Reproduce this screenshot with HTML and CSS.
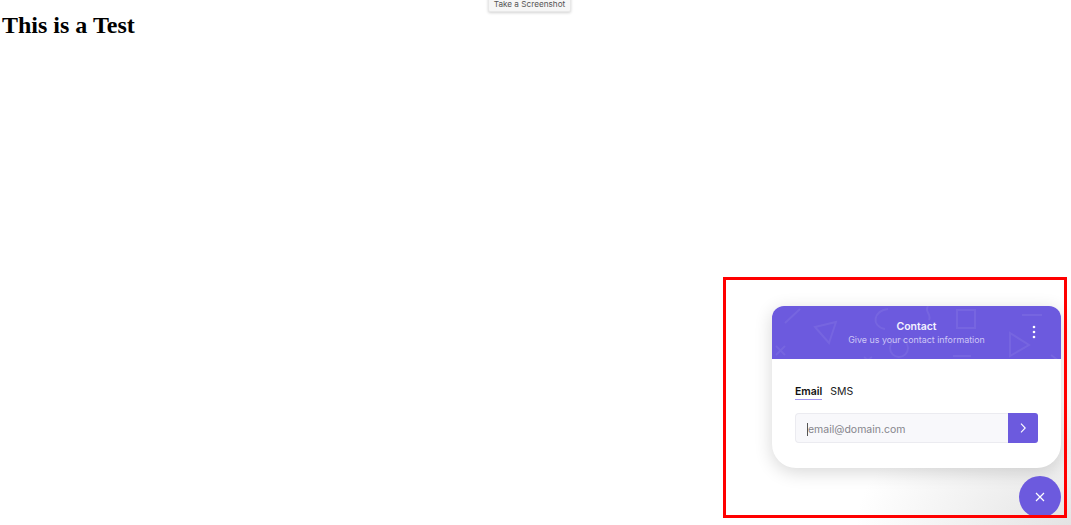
FILE: index.html
```html
<!DOCTYPE html>
<html lang="en">
<head>
    <meta charset="UTF-8">
    <meta name="viewport" content="width=device-width, initial-scale=1.0">
    <title>This is a Test</title>
    <link rel="stylesheet" href="styles.css">
</head>
<body>
    <button type="button" class="shot-btn">Take a Screenshot</button>
    <h1 class="title">This is a Test</h1>

    <div class="corner-glow"></div>

    <div class="widget">
        <div class="card">
            <div class="card-head">
                <svg class="head-shapes" width="289" height="53" viewBox="0 0 289 53" fill="none">
                    <path d="M13 17 L28 3"/>
                    <path d="M43 21 L64 16 L57 37 Z"/>
                    <path d="M4 40 L13 49 M13 40 L4 49"/>
                    <path d="M116 3 C102 4 98 20 113 23"/>
                    <path d="M156 0 C152 6 160 8 157 14"/>
                    <rect x="185" y="4" width="18" height="18"/>
                    <circle cx="127" cy="42" r="9"/>
                    <path d="M181 50 H199"/>
                    <path d="M250 9 H270"/>
                    <path d="M238 27 L238 50 L257 39 Z"/>
                    <path d="M92 51 L100 57 M100 51 L92 57"/>
                    <path d="M279 49 L287 55"/>
                </svg>
                <div class="head-title">Contact</div>
                <div class="head-sub">Give us your contact information</div>
                <svg class="head-menu" width="4" height="14" viewBox="0 0 4 14" fill="#fff">
                    <circle cx="2" cy="2" r="1.3"/>
                    <circle cx="2" cy="7" r="1.3"/>
                    <circle cx="2" cy="12" r="1.3"/>
                </svg>
            </div>
            <div class="card-body">
                <div class="tabs">
                    <span class="tab tab-active">Email</span>
                    <span class="tab">SMS</span>
                </div>
                <div class="email-row">
                    <div class="email-input"><span class="caret"></span><span>email@domain.com</span></div>
                    <div class="email-send">
                        <svg width="8" height="12" viewBox="0 0 8 12" fill="none" stroke="#fff" stroke-width="1.1">
                            <path d="M2 1.7 L6.2 6 L2 10.3"/>
                        </svg>
                    </div>
                </div>
            </div>
        </div>
        <div class="fab">
            <svg width="12" height="12" viewBox="0 0 12 12" fill="none" stroke="#fff" stroke-width="1.2">
                <path d="M2 2 L10 10 M10 2 L2 10"/>
            </svg>
        </div>
    </div>

    <!-- red box drawn over the widget -->
    <div class="red-frame"></div>
</body>
</html>
```

FILE: styles.css
```css
body {
    margin: 0;
    height: 525px;
    overflow: hidden;
    background-color: #fff;
    font-family: Inter, Arial, sans-serif;
}

.title {
    margin: 0;
    padding: 12px 0 0 2px;
    font-family: "Liberation Serif", "Times New Roman", serif;
    font-size: 24px;
    line-height: 27px;
    font-weight: bold;
    color: #000;
}

.shot-btn {
    position: absolute;
    top: -6px;
    left: 488px;
    height: 18px;
    width: 83px;
    padding: 2px 0 0;
    font-family: Inter, Arial, sans-serif;
    font-size: 8.2px;
    color: #555;
    background-color: #f6f6f6;
    border: 1px solid #e8e8e8;
    border-radius: 2px;
    box-shadow: 0 1px 3px rgba(0, 0, 0, 0.18);
}

.corner-glow {
    position: absolute;
    right: 0;
    bottom: 0;
    width: 240px;
    height: 140px;
    background: radial-gradient(ellipse 215px 125px at 100% 100%, #e4e4e4 0%, #f0f0f0 45%, rgba(255, 255, 255, 0) 100%);
}

.widget {
    position: absolute;
    right: 10px;
    bottom: 7px;
    display: flex;
    flex-direction: column;
    align-items: flex-end;
    gap: 8px;
}

.card {
    width: 289px;
    height: 162px;
    background-color: #fff;
    border-radius: 12px 12px 24px 24px;
    box-shadow: 0 4px 18px rgba(0, 0, 0, 0.16);
    overflow: hidden;
}

.card-head {
    position: relative;
    height: 53px;
    box-sizing: border-box;
    padding-top: 14px;
    text-align: center;
    background-color: #6c5ade;
}

.head-shapes {
    position: absolute;
    top: 0;
    left: 0;
    stroke: rgba(255, 255, 255, 0.07);
    stroke-width: 2;
}

.head-title {
    position: relative;
    font-size: 10.5px;
    line-height: 14px;
    font-weight: 600;
    color: #f4f2ff;
}

.head-sub {
    position: relative;
    font-size: 8.9px;
    line-height: 12px;
    color: #cfc8f6;
}

.head-menu {
    position: absolute;
    top: 19px;
    right: 25px;
}

.card-body {
    padding: 26px 23px 0;
}

.tabs {
    display: flex;
    gap: 8px;
}

.tab {
    height: 14px;
    font-size: 10.5px;
    line-height: 14px;
    color: #222;
}

.tab-active {
    font-weight: 600;
    color: #111;
    border-bottom: 1px solid #a295ee;
}

.email-row {
    display: flex;
    height: 30px;
    margin-top: 13px;
}

.email-input {
    flex: 1;
    display: flex;
    align-items: center;
    padding: 2px 0 0 11px;
    font-size: 10.5px;
    color: #85858c;
    background-color: #f8f8fb;
    border: 1px solid #ebebf0;
    border-right: none;
    border-radius: 4px 0 0 4px;
}

.caret {
    width: 1px;
    height: 13px;
    background-color: #555;
}

.email-send {
    width: 30px;
    display: flex;
    align-items: center;
    justify-content: center;
    background-color: #6c5ade;
    border-radius: 0 3px 3px 0;
}

.fab {
    width: 42px;
    height: 42px;
    display: flex;
    align-items: center;
    justify-content: center;
    background-color: #6c5ade;
    border-radius: 50%;
}

.red-frame {
    position: absolute;
    left: 723px;
    top: 277px;
    width: 338px;
    height: 235px;
    border: 3px solid #ff0000;
}
```
